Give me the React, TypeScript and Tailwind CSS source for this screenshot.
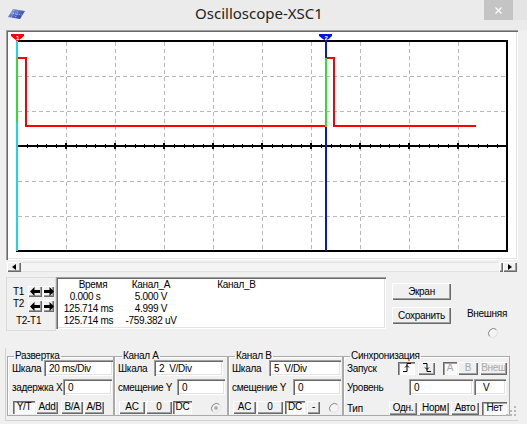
import React from "react";

const raised =
  "bg-[#f0f0f0] shadow-[inset_1px_1px_0_#ffffff,inset_-1px_-1px_0_#696969,inset_-2px_-2px_0_#a0a0a0]";
const pressed =
  "bg-[#fafafa] shadow-[inset_1px_1px_0_#696969,inset_2px_2px_0_#a0a0a0,inset_-1px_-1px_0_#ffffff]";
const sunken =
  "bg-white shadow-[inset_1px_1px_0_#a0a0a0,inset_2px_2px_0_#696969,inset_-1px_-1px_0_#ffffff,inset_-2px_-2px_0_#e3e3e3]";

function Btn({
  children,
  className = "",
  on = false,
  off = false,
}: {
  children?: React.ReactNode;
  className?: string;
  on?: boolean;
  off?: boolean;
}) {
  return (
    <div
      className={`flex h-[13px] items-center justify-center pb-[1px] leading-none ${on ? pressed : raised} ${
        off ? "text-[#a8a8a8]" : ""
      } ${className}`}
    >
      {children}
    </div>
  );
}

function Field({ children, className = "" }: { children?: React.ReactNode; className?: string }) {
  return (
    <div className={`flex h-[16px] shrink-0 items-center whitespace-pre pl-[5px] ${sunken} ${className}`}>
      {children}
    </div>
  );
}

function Radio({ dot = false }: { dot?: boolean }) {
  return (
    <svg width="12" height="12" viewBox="0 0 12 12" className="block">
      <circle cx="6" cy="6" r="5" fill="#f4f4f4" />
      <path d="M2.5 9.5 A5 5 0 0 1 9.5 2.5" stroke="#8a8a8a" fill="none" />
      <path d="M9.5 2.5 A5 5 0 0 1 2.5 9.5" stroke="#e0e0e0" fill="none" />
      {dot && <circle cx="6" cy="6" r="2" fill="#b0b0b0" />}
    </svg>
  );
}

function Arrow({ left = false }: { left?: boolean }) {
  return (
    <svg width="10" height="9" viewBox="0 0 10 9" className={left ? "" : "-scale-x-100"}>
      <polygon points="0,4.5 4.5,0 4.5,3 10,3 10,6 4.5,6 4.5,9" fill="#000" />
    </svg>
  );
}

function Edge({ rising = false }: { rising?: boolean }) {
  return (
    <svg width="10" height="9" viewBox="0 0 10 9">
      {rising ? (
        <>
          <path d="M1 8.5 H5 V0.5 H9" stroke="#000" fill="none" />
          <path d="M3 4.5 L5 2.5 L7 4.5" stroke="#000" fill="none" />
        </>
      ) : (
        <>
          <path d="M1 0.5 H5 V8.5 H9" stroke="#000" fill="none" />
          <path d="M3 4.5 L5 6.5 L7 4.5" stroke="#000" fill="none" />
        </>
      )}
    </svg>
  );
}

function AppIcon() {
  return (
    <svg width="17" height="10" viewBox="0 0 17 10">
      <defs>
        <linearGradient id="ai" x1="0" y1="0" x2="1" y2="1">
          <stop offset="0" stopColor="#8ea2ee" />
          <stop offset="1" stopColor="#1f2f8e" />
        </linearGradient>
      </defs>
      <polygon points="5,0 17,2 12,10 0,8" fill="url(#ai)" />
      <path d="M3 4 L14 6 M6 1 L3 9 M10 1.5 L7 9.5" stroke="#dfe6ff" strokeWidth="0.7" strokeDasharray="1 1" />
    </svg>
  );
}

function Scope() {
  const vx = [66, 115, 164, 213, 262, 311, 360, 409, 458];
  const hy = [76, 111, 181, 216];
  const ticks = Array.from({ length: 51 }, (_, i) => ({ x: 17 + i * 9.8, major: i % 5 === 0 }));
  return (
    <svg width="508" height="226" viewBox="8 32 508 226" className="block">
      {vx.map((x) => (
        <line key={x} x1={x + 0.5} y1={42} x2={x + 0.5} y2={250} stroke="#b8b8b8" strokeDasharray="4 3" />
      ))}
      {hy.map((y) => (
        <line key={y} x1={18} y1={y + 0.5} x2={506} y2={y + 0.5} stroke="#b8b8b8" strokeDasharray="4 3" />
      ))}
      <rect x={17} y={41} width={490} height={210} fill="none" stroke="#000" strokeWidth={2} />
      <line x1={17} y1={146} x2={507} y2={146} stroke="#000" strokeWidth={2} />
      {ticks.map((t) => (
        <line
          key={t.x}
          x1={Math.round(t.x) + (t.major ? 0 : 0.5)}
          x2={Math.round(t.x) + (t.major ? 0 : 0.5)}
          y1={t.major ? 143 : 144}
          y2={t.major ? 149 : 148}
          stroke="#000"
          strokeWidth={t.major ? 2 : 1}
        />
      ))}
      <rect x={16} y={181} width={2} height={1} fill="#e00" />
      <rect x={16} y={216} width={2} height={1} fill="#e00" />
      {/* trace */}
      <polyline points="18,58 26,58 26,126 325,126" fill="none" stroke="#ff0000" strokeWidth={2} />
      <polyline points="327,58 334,58 334,126 476,126" fill="none" stroke="#ff0000" strokeWidth={2} />
      {/* cursor 1 */}
      <rect x={16} y={36} width={2} height={215} fill="#1ad7e8" />
      <rect x={16} y={58} width={2} height={64} fill="#2ee02e" />
      <polygon points="11,34 24,34 24,36 18,41 17,41 11,36" fill="#ff0000" />
      <text x={17.5} y={39.6} fontSize={6} fontWeight="bold" fill="#fff" textAnchor="middle" fontFamily="Liberation Sans">
        1
      </text>
      {/* cursor 2 */}
      <rect x={325} y={36} width={2} height={215} fill="#0a14d6" />
      <rect x={325} y={58} width={2} height={69} fill="#2ee02e" />
      <polygon points="319,34 332,34 332,36 326.5,41 325.5,41 319,36" fill="#0a14d6" />
      <text x={326} y={39.6} fontSize={6} fontWeight="bold" fill="#fff" textAnchor="middle" fontFamily="Liberation Sans">
        2
      </text>
    </svg>
  );
}

export default function App() {
  return (
    <div className="relative h-[424px] w-[527px] overflow-hidden whitespace-nowrap bg-[#f0f0f0] font-['Liberation_Sans',Arial,sans-serif] text-[10px] tracking-[-0.3px] text-black">
      {/* title bar */}
      <div className="flex h-[30px] items-start bg-[#ebebeb]">
        <div className="w-[30px] pl-[8px] pt-[9px]">
          <AppIcon />
        </div>
        <div className="flex-1 pl-[4px] pt-[3px] text-center font-['Noto_Sans',sans-serif] text-[15px] leading-[20px] tracking-normal text-[#222]">
          Oscilloscope-XSC1
        </div>
        <div className="flex h-[20px] w-[29px] items-center justify-center bg-[#c4c4c4]">
          <svg width="7" height="7" viewBox="0 0 7 7">
            <path d="M0.5 0.5 L6.5 6.5 M6.5 0.5 L0.5 6.5" stroke="#fff" strokeWidth="1.2" />
          </svg>
        </div>
        <div className="h-[20px] w-[14px] bg-[#e4e4e4]" />
      </div>

      {/* screen */}
      <div className={`ml-[6px] h-[230px] w-[512px] p-[2px] ${sunken}`}>
        <Scope />
      </div>

      {/* scrollbar */}
      <div className="ml-[7px] mt-[2px] flex h-[10px] w-[510px] bg-[#f4f4f4]">
        <div className={`flex w-[14px] items-center justify-center ${raised}`}>
          <svg width="4" height="6" viewBox="0 0 4 6">
            <polygon points="4,0 4,6 0,3" fill="#000" />
          </svg>
        </div>
        <div className="flex-1 border-y border-[#e2e2e2]" />
        <div className={`w-[4px] ${raised}`} />
        <div className={`flex w-[14px] items-center justify-center ${raised}`}>
          <svg width="4" height="6" viewBox="0 0 4 6">
            <polygon points="0,0 0,6 4,3" fill="#000" />
          </svg>
        </div>
      </div>

      {/* cursors readout row */}
      <div className="ml-[6px] mt-[5px] flex items-start">
        <div className="h-[54px] w-[50px] border border-[#dadada] pl-[6px] pt-[8px]">
          <div className="flex">
            <div className="w-[15px] leading-[12px]">
              <div>T1</div>
              <div>T2</div>
            </div>
            <div className="grid grid-cols-[14px_11px] grid-rows-[11px_12px] gap-x-[1px] gap-y-[3px]">
              <div className={`flex items-center justify-center ${raised}`}>
                <Arrow left />
              </div>
              <div className={`flex items-center justify-center ${raised}`}>
                <Arrow />
              </div>
              <div className={`flex items-center justify-center ${raised}`}>
                <Arrow left />
              </div>
              <div className={`flex items-center justify-center ${raised}`}>
                <Arrow />
              </div>
            </div>
          </div>
          <div className="mt-[3px] pl-[3px] leading-[12px]">T2-T1</div>
        </div>

        <div className={`h-[52px] w-[330px] pt-[2px] leading-[12px] ${sunken}`}>
          <div className="flex">
            <span className="flex w-[74px] justify-center">Время</span>
            <span className="flex w-[42px] justify-center">Канал_A</span>
            <span className="flex w-[129px] justify-center">Канал_B</span>
          </div>
          <div className="flex">
            <span className="flex w-[74px] justify-center pr-[16px]">0.000 s</span>
            <span className="flex w-[42px] justify-center">5.000 V</span>
          </div>
          <div className="flex">
            <span className="flex w-[74px] justify-center pr-[9px]">125.714 ms</span>
            <span className="flex w-[42px] justify-center">4.999 V</span>
          </div>
          <div className="flex">
            <span className="flex w-[74px] justify-center pr-[9px]">125.714 ms</span>
            <span className="flex w-[42px] justify-center">-759.382 uV</span>
          </div>
        </div>

        <div className="ml-[6px] flex w-[59px] flex-col gap-[7px] pt-[6px]">
          <div className={`flex h-[17px] items-center justify-center ${raised}`}>Экран</div>
          <div className={`flex h-[17px] items-center justify-center ${raised}`}>Сохранить</div>
        </div>

        <div className="ml-[16px] pt-[31px] leading-[12px]">
          <div>Внешняя</div>
          <div className="ml-[20px] mt-[7px]">
            <Radio />
          </div>
        </div>
      </div>

      {/* control groups */}
      <div className="ml-[5px] mt-[9px] flex h-[73px] w-[513px] border-b border-l border-[#d2d2d2] pl-[1px] pt-[2px]">
        <fieldset className="h-[66px] w-[107px] border border-[#a9a9a9] shadow-[inset_1px_1px_0_#ffffff]">
          <legend className="ml-[6px] px-[1px] leading-[12px]">Развертка</legend>
          <div className="-mt-[2px] pl-[4px]">
            <div className="flex h-[16px] items-center">
              <span>Шкала</span>
              <Field className="ml-auto w-[69px]">20 ms/Div</Field>
            </div>
            <div className="mt-[3px] flex h-[16px] items-center">
              <span>задержка X</span>
              <Field className="ml-auto mr-[1px] w-[49px]">0</Field>
            </div>
            <div className="mt-[6px] flex">
              <Btn on className="ml-[1px] w-[22px]">
                Y/T
              </Btn>
              <Btn className="ml-[1px] w-[22px]">Add</Btn>
              <Btn className="ml-[3px] w-[22px]">B/A</Btn>
              <Btn className="ml-[1px] w-[20px]">A/B</Btn>
            </div>
          </div>
        </fieldset>

        <fieldset className="h-[66px] w-[114px] border border-[#a9a9a9] shadow-[inset_1px_1px_0_#ffffff]">
          <legend className="ml-[7px] px-[1px] leading-[12px]">Канал А</legend>
          <div className="-mt-[2px] pl-[3px]">
            <div className="flex h-[16px] items-center">
              <span>Шкала</span>
              <Field className="ml-auto mr-[4px] w-[69px]">2  V/Div</Field>
            </div>
            <div className="mt-[3px] flex h-[16px] items-center">
              <span>смещение Y</span>
              <Field className="ml-auto mr-[2px] w-[48px]">0</Field>
            </div>
            <div className="mt-[6px] flex items-center">
              <Btn className="ml-[1px] w-[26px]">AC</Btn>
              <Btn className="ml-[1px] w-[26px]">0</Btn>
              <Btn on className="ml-[1px] w-[19px]">
                DC
              </Btn>
              <div className="ml-[18px]">
                <Radio dot />
              </div>
            </div>
          </div>
        </fieldset>

        <fieldset className="h-[66px] w-[115px] border border-[#a9a9a9] shadow-[inset_1px_1px_0_#ffffff]">
          <legend className="ml-[6px] px-[1px] leading-[12px]">Канал B</legend>
          <div className="-mt-[2px] pl-[3px]">
            <div className="flex h-[16px] items-center">
              <span>Шкала</span>
              <Field className="ml-auto mr-[1px] w-[72px]">5  V/Div</Field>
            </div>
            <div className="mt-[3px] flex h-[16px] items-center">
              <span>смещение Y</span>
              <Field className="ml-auto mr-[1px] w-[48px]">0</Field>
            </div>
            <div className="mt-[6px] flex items-center">
              <Btn className="ml-[1px] w-[23px]">AC</Btn>
              <Btn className="ml-[1px] w-[26px]">0</Btn>
              <Btn on className="ml-[2px] w-[20px]">
                DC
              </Btn>
              <Btn className="ml-[2px] w-[13px]">-</Btn>
              <div className="ml-[8px]">
                <Radio />
              </div>
            </div>
          </div>
        </fieldset>

        <fieldset className="h-[66px] w-[167px] border border-[#a9a9a9] shadow-[inset_1px_1px_0_#ffffff]">
          <legend className="ml-[6px] px-[1px] leading-[12px]">Синхронизация</legend>
          <div className="-mt-[2px] pl-[3px]">
            <div className="flex h-[16px] items-center">
              <span>Запуск</span>
              <div className="ml-auto mr-[2px] flex">
                <Btn on className="w-[17px]">
                  <Edge rising />
                </Btn>
                <Btn className="ml-[3px] w-[17px]">
                  <Edge />
                </Btn>
                <Btn on off className="ml-[8px] w-[14px]">
                  A
                </Btn>
                <Btn off className="ml-[1px] w-[20px]">
                  B
                </Btn>
                <Btn off className="ml-[2px] w-[27px]">
                  Внеш
                </Btn>
              </div>
            </div>
            <div className="mt-[3px] flex h-[16px] items-center">
              <span>Уровень</span>
              <Field className="ml-auto w-[64px]">0</Field>
              <Field className="ml-[1px] mr-[3px] w-[32px] pl-[9px]">V</Field>
            </div>
            <div className="mt-[6px] flex items-center">
              <span>Тип</span>
              <div className="ml-auto mr-[2px] flex">
                <Btn className="w-[28px]">Одн.</Btn>
                <Btn className="ml-[2px] w-[30px]">Норм</Btn>
                <Btn className="ml-[2px] w-[28px]">Авто</Btn>
                <Btn on className="ml-[3px] w-[25px]">
                  Нет
                </Btn>
              </div>
            </div>
          </div>
        </fieldset>
      </div>

      {/* size grip */}
      <svg width="11" height="11" viewBox="0 0 11 11" className="absolute left-[506px] top-[406px]">
        {[
          [8, 0],
          [8, 4],
          [4, 4],
          [8, 8],
          [4, 8],
          [0, 8],
        ].map(([x, y]) => (
          <rect key={`${x}-${y}`} x={x} y={y} width={2} height={2} fill="#b8b8b8" />
        ))}
      </svg>
    </div>
  );
}
